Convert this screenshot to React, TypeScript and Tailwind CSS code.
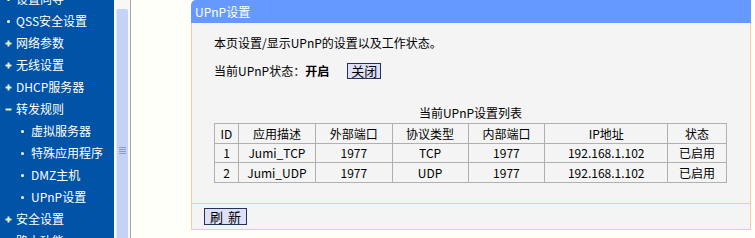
import React from "react";

const Plus = () => (
  <svg width="7" height="7" viewBox="0 0 7 7" className="shrink-0">
    <path d="M3.5 0.5V6.5M0.5 3.5H6.5" stroke="#e6f2c4" strokeWidth="2" />
  </svg>
);
const Minus = () => (
  <svg width="7" height="7" viewBox="0 0 7 7" className="shrink-0">
    <path d="M0.5 3.5H6.5" stroke="#e6f2c4" strokeWidth="2" />
  </svg>
);
const Dot = () => <span className="w-[3px] h-[3px] bg-white rounded-full shrink-0 mx-[2px]" />;

type Item = { label: string; kind: "dot" | "plus" | "minus"; sub?: boolean };
const items: Item[] = [
  { label: "设置向导", kind: "dot" },
  { label: "QSS安全设置", kind: "dot" },
  { label: "网络参数", kind: "plus" },
  { label: "无线设置", kind: "plus" },
  { label: "DHCP服务器", kind: "plus" },
  { label: "转发规则", kind: "minus" },
  { label: "虚拟服务器", kind: "dot", sub: true },
  { label: "特殊应用程序", kind: "dot", sub: true },
  { label: "DMZ主机", kind: "dot", sub: true },
  { label: "UPnP设置", kind: "dot", sub: true },
  { label: "安全设置", kind: "plus" },
  { label: "路由功能", kind: "plus" },
];

const cols = [
  { h: "ID", w: "w-[24px]" },
  { h: "应用描述", w: "w-[77px]" },
  { h: "外部端口", w: "w-[77px]" },
  { h: "协议类型", w: "w-[76px]" },
  { h: "内部端口", w: "w-[77px]" },
  { h: "IP地址", w: "w-[123px]" },
  { h: "状态", w: "w-[59px]" },
];
const rows = [
  ["1", "Jumi_TCP", "1977", "TCP", "1977", "192.168.1.102", "已启用"],
  ["2", "Jumi_UDP", "1977", "UDP", "1977", "192.168.1.102", "已启用"],
];

export default function App() {
  return (
    <div className="w-[755px] h-[238px] overflow-hidden flex font-['Noto_Sans_CJK_SC','Liberation_Sans',sans-serif] text-[12px] leading-[14px] text-black bg-[#fffffa]">
      {/* Sidebar */}
      <div className="w-[114px] shrink-0 bg-[#0053a6] overflow-hidden">
        <div className="flex flex-col mt-[-12px]">
          {items.map((it) => (
            <div
              key={it.label}
              className={`h-[22px] flex items-center text-white ${it.sub ? "pl-[19px] gap-[5px]" : "pl-[5px] gap-[4px]"}`}
            >
              {it.kind === "dot" ? <Dot /> : it.kind === "plus" ? <Plus /> : <Minus />}
              <span>{it.label}</span>
            </div>
          ))}
        </div>
      </div>
      {/* Scrollbar */}
      <div className="w-[17px] shrink-0 bg-[#f7f7f4] pt-[9px] pl-[2px] flex border-r border-[#9ea6c2]">
        <div className="w-[12px] h-full bg-[#c5d2f7] border-l border-[#dfe6fb] rounded-t-[2px] flex flex-col items-center pt-[138px] gap-[1px]">
          <div className="w-[7px] h-[1px] bg-[#8e9ac0]" />
          <div className="w-[7px] h-[1px] bg-[#8e9ac0]" />
          <div className="w-[7px] h-[1px] bg-[#8e9ac0]" />
          <div className="w-[7px] h-[1px] bg-[#8e9ac0]" />
        </div>
      </div>
      {/* Content */}
      <div className="flex-1 pl-[60px] pr-[4px]">
        <div className="flex flex-col">
          <div className="h-[23px] bg-[#6699ff] rounded-tl-[5px] text-white flex items-center pl-[4px]">
            UPnP设置
          </div>
          <div className="bg-[#f4f4f4] border-l border-r border-b border-[#f0cf9c]">
            <div className="pl-[22px] pt-[13px] h-[180px]">
              <div className="h-[14px]">本页设置/显示UPnP的设置以及工作状态。</div>
              <div className="mt-[13px] flex items-center h-[16px]">
                <span>当前UPnP状态：</span>
                <span className="font-bold">开启</span>
                <span className="ml-[18px] w-[34px] h-[16px] bg-[#dde0f7] border border-[#283058] flex items-center justify-center text-[13px]">
                  关闭
                </span>
              </div>
              <div className="w-[513px] mt-[27px] text-center">当前UPnP设置列表</div>
              <table className="mt-[3px] w-[513px] border-collapse border border-[#a4a4a4] text-center">
                <thead>
                  <tr className="h-[20px]">
                    {cols.map((c) => (
                      <th key={c.h} className={`${c.w} p-0 font-normal border border-[#b0b0b0]`}>
                        {c.h}
                      </th>
                    ))}
                  </tr>
                </thead>
                <tbody>
                  {rows.map((r, i) => (
                    <tr key={i} className={i === 0 ? "h-[19px]" : "h-[20px]"}>
                      {r.map((v, j) => (
                        <td key={j} className="p-0 border border-[#b0b0b0]">
                          {v}
                        </td>
                      ))}
                    </tr>
                  ))}
                </tbody>
              </table>
            </div>
            <div className="border-t border-[#f0cf9c] h-[26px] pl-[12px] pt-[4px]">
              <div className="w-[43px] h-[17px] bg-[#dde0f7] border border-[#283058] flex items-center justify-center text-[13px] gap-[5px]">
                <span>刷</span>
                <span>新</span>
              </div>
            </div>
          </div>
        </div>
      </div>
    </div>
  );
}
